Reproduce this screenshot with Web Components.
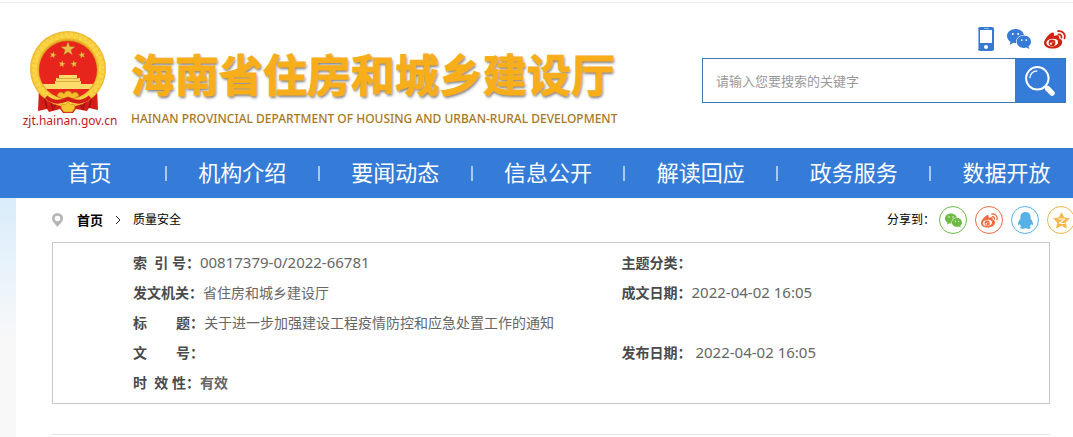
<!DOCTYPE html>
<html lang="zh-CN">
<head>
<meta charset="utf-8">
<title>海南省住房和城乡建设厅</title>
<style>
  html { background: #f8f8f8; }
  body {
    margin: 0;
    overflow-x: hidden;
    font: 14px/30px "Noto Sans", "Noto Sans CJK SC", sans-serif;
    color: #666;
  }
</style>
</head>
<body>
<gov-header>
  <gov-brand slot="brand" site="zjt.hainan.gov.cn">
    海南省住房和城乡建设厅
    <span slot="english">HAINAN PROVINCIAL DEPARTMENT OF HOUSING AND URBAN-RURAL DEVELOPMENT</span>
  </gov-brand>
  <gov-search slot="tools"></gov-search>
</gov-header>
<gov-nav>
  <gov-nav-item>首页</gov-nav-item>
  <gov-nav-item>机构介绍</gov-nav-item>
  <gov-nav-item>要闻动态</gov-nav-item>
  <gov-nav-item>信息公开</gov-nav-item>
  <gov-nav-item>解读回应</gov-nav-item>
  <gov-nav-item>政务服务</gov-nav-item>
  <gov-nav-item>数据开放</gov-nav-item>
</gov-nav>
<gov-page>
  <gov-crumbs slot="crumbs">质量安全</gov-crumbs>
  <gov-share slot="share"></gov-share>
  <gov-record>
    <gov-field number><span slot="label">索&nbsp;&nbsp;引&nbsp;号：</span>00817379-0/2022-66781</gov-field>
    <gov-field><span slot="label">主题分类：</span></gov-field>
    <gov-field><span slot="label">发文机关：</span>省住房和城乡建设厅</gov-field>
    <gov-field number><span slot="label">成文日期：</span>2022-04-02 16:05</gov-field>
    <gov-field wide><span slot="label">标&nbsp;&nbsp;&nbsp;&nbsp;&nbsp;&nbsp;&nbsp;&nbsp;题：</span>关于进一步加强建设工程疫情防控和应急处置工作的通知</gov-field>
    <gov-field><span slot="label">文&nbsp;&nbsp;&nbsp;&nbsp;&nbsp;&nbsp;&nbsp;&nbsp;号：</span></gov-field>
    <gov-field number><span slot="label">发布日期：</span>&nbsp;2022-04-02 16:05</gov-field>
    <gov-field wide><span slot="label">时&nbsp;&nbsp;效&nbsp;性：</span><b>有效</b></gov-field>
  </gov-record>
</gov-page>

<script>
const define = (name, html) => {
  const template = document.createElement('template');
  template.innerHTML = html;
  customElements.define(name, class extends HTMLElement {
    constructor() {
      super();
      this.attachShadow({ mode: 'open' }).append(template.content.cloneNode(true));
    }
    connectedCallback() {
      const site = this.shadowRoot.querySelector('.site');
      if (site) site.textContent = this.getAttribute('site');
    }
  });
};

const ICONS = {
  phone: ['0 0 16 24', '<path fill="#3779d0" d="M2 0h12a2 2 0 0 1 2 2v20a2 2 0 0 1-2 2H2a2 2 0 0 1-2-2V2a2 2 0 0 1 2-2z"/><path fill="#8ab4ec" d="M0 2h1v20H0zM6 1h5v1H6z"/><path fill="#fff" d="M2 3h12v13H2z"/><circle cx="8" cy="20" r="2" fill="#fff"/>'],
  wechat: ['0 0 24 20', '<path fill="currentColor" d="M8.500 0C3.800 0 0 3.100 0 7c0 2.500 1.400 4.500 3.500 5.700L2.700 16l3.500-2.200c1 .3 2 .4 3.100.3-1-4.500 2.600-8.200 7.700-8.200C16 2.400 12.700 0 8.500 0z"/><path fill="currentColor" d="M17 6.600c-4 0-7.300 2.800-7.300 6.200S13 19 17 19c.9 0 1.800-.1 2.500-.4l2.900 1.400-.8-2.700c1.500-1.100 2.400-2.600 2.400-4.500 0-3.400-3.100-6.200-7-6.200z"/><g fill="#fff"><circle cx="5.800" cy="5" r="1"/><circle cx="11.200" cy="5" r="1"/><circle cx="14.700" cy="11.100" r=".9"/><circle cx="19.300" cy="11.100" r=".9"/></g>'],
  weibo: ['0 0 22 19', '<path fill="currentColor" d="M8.800 2.500c1.500.4 1.500 1.900 1 3.500 2.500-1 5-.9 5.400.7.200.7 0 1.300-.2 1.900 2 .5 3.400 1.700 3.200 3.800-.4 3.600-4.800 6.200-9.600 6.200C3.900 18.600 0 16.500 0 13c0-3.300 5.600-10.500 8.800-10.500z"/><ellipse cx="8.300" cy="12.600" rx="5.900" ry="3.900" fill="#fff" transform="rotate(-7 8.300 12.600)"/><circle cx="8" cy="12.800" r="3.400" fill="currentColor"/><circle cx="6.900" cy="13.700" r="1.100" fill="#fff"/><circle cx="9" cy="12" r=".6" fill="#fff"/><path fill="none" stroke="currentColor" stroke-width="1.700" stroke-linecap="round" d="M14 1.200c4.500-.8 7.900 2.800 6.500 7.300M14.500 4.400c2-.2 3.400 1.300 2.900 3.300"/>'],
  qq: ['0 0 20 20', '<path fill="currentColor" d="M10 0C6.100 0 4 2.500 4 5.800v2C2.300 9.800.8 12.300 1.300 15c.2.900 1.200.4 2-1 .4 1.300 1 2.300 1.900 3-1.300.5-1.600 1.400-1 2.100.8.900 4.600.9 5.800-.2 1.200 1.100 5 1.100 5.800.2.600-.7.300-1.600-1-2.100.9-.7 1.500-1.700 1.900-3 .8 1.400 1.800 1.900 2 1 .5-2.700-1-5.200-2.700-7.200v-2C16 2.500 13.900 0 10 0z"/>'],
  qzone: ['0 0 20 20', '<path fill="currentColor" stroke="currentColor" stroke-linejoin="round" d="m10 1 2.800 5.900 6.400.8-4.700 4.500 1.200 6.500L10 15.600l-5.700 3.100 1.200-6.500L.8 7.700l6.400-.8z"/><path fill="none" stroke="#fff" stroke-width="1.200" d="M6.500 8.500c2.500-.7 4.600-.7 7 0L7.500 13c2 .6 4.500.7 7 .2"/>'],
  pin: ['0 0 11 14', '<path fill="#b5b5b5" fill-rule="evenodd" d="M5.500 0A5.500 5.500 0 0 0 0 5.500C0 9 3.200 10.500 5.500 14 7.800 10.500 11 9 11 5.500A5.500 5.500 0 0 0 5.500 0zm0 2.700a2.800 2.800 0 1 1 0 5.600 2.800 2.800 0 0 1 0-5.600z"/>'],
  arrow: ['0 0 6 10', '<path fill="none" stroke="#222" d="m1 1 4 4-4 4"/>'],
  search: ['0 0 28 28', '<circle cx="11.500" cy="11.500" r="10.500" fill="none" stroke="#fff" stroke-width="1.800"/><path fill="none" stroke="#fff" stroke-width="1.200" d="M4.500 11.500c0-4 3-7 7-7"/><path stroke="#fff" stroke-width="5" stroke-linecap="round" d="m21 21 4.300 4.300"/><path stroke="#fff" stroke-width="2.200" d="m18.500 18.500 2 2"/>']
};
customElements.define('gov-icon', class extends HTMLElement {
  constructor() {
    super();
    this.attachShadow({ mode: 'open' });
  }
  connectedCallback() {
    const [box, shapes] = ICONS[this.getAttribute('name')];
    this.shadowRoot.innerHTML = `<style>:host{display:block;flex:none}svg{display:block;width:100%;height:100%}</style><svg viewBox="${box}" aria-hidden="true">${shapes}</svg>`;
  }
});

define('gov-emblem', `
<style>:host { display: block; width: 78px; height: 82px; } svg { display: block; width: 100%; height: 100%; }</style>
<svg viewBox="0 0 78 82" role="img" aria-label="国徽">
  <defs>
    <radialGradient id="gold" cx=".5" cy=".5" r=".5"><stop offset=".74" stop-color="#d79a18"/><stop offset=".82" stop-color="#f8cc38"/><stop offset=".93" stop-color="#fbd747"/><stop offset="1" stop-color="#e9ad25"/></radialGradient>
    <path id="star" d="m0-10 2.400 6.700 7.100.2-5.600 4.400 2 6.800L0 4.100l-5.900 4 2-6.800-5.600-4.400 7.100-.2z"/>
    <clipPath id="disc"><circle cx="39" cy="39" r="29"/></clipPath>
  </defs>
  <path fill="#d51d18" d="M10 57 31 70 39 72 47 70 68 57 69 79 60 77 58 80 47 78 44 82H34l-3-4-11 3-2-3-9 2z"/>
  <path fill="none" stroke="#930e0c" stroke-width="1.200" d="m14 62 4 15m3-11 3 13m40-17-4 15m-3-11-3 13M28 70l-3 7m25-7 3 7"/>
  <circle cx="39" cy="38" r="38" fill="url(#gold)"/>
  <circle cx="39" cy="38" r="35" fill="none" stroke="#cc901e" stroke-width="2" stroke-dasharray="1 4" opacity=".35"/>
  <circle cx="39" cy="38" r="32" fill="none" stroke="#fff08a" stroke-width="1.500" stroke-dasharray="2 4" opacity=".4"/>
  <circle cx="39" cy="39" r="29" fill="#e8251d"/>
  <g fill="#eabd4c" stroke="#b66b12" stroke-width=".5">
    <use href="#star" transform="translate(39 18) scale(.75)"/>
    <use href="#star" transform="translate(24 24) scale(.36) rotate(15)"/>
    <use href="#star" transform="translate(53 24) scale(.36) rotate(-15)"/>
    <use href="#star" transform="translate(33 33) scale(.36) rotate(10)"/>
    <use href="#star" transform="translate(45 33) scale(.36) rotate(-10)"/>
  </g>
  <g clip-path="url(#disc)">
    <path fill="#fbdc6a" d="M30 44h18v3h3v3h1v3h24v5H2v-5h24v-3h1v-3h3z"/>
    <path stroke="#c98825" d="M28 47.500h22M27 50.500h24" stroke-width=".6"/>
  </g>
  <path fill="#f2bd2c" stroke="#c6851a" stroke-width=".6" d="M28 65c1-4 5-5 7-2 1-4 7-4 8 0 2-3 6-2 7 2l-6 3-5-2-5 2z"/>
  <path fill="none" stroke="#d51d18" stroke-width="4" d="M17 66c9 7 14 5 22 2 8 3 13 5 22-2"/>
  <path fill="#f5c631" stroke="#c6851a" stroke-width=".6" d="m33 73 3 1 3-3 3 3 3-1 1 4-3 4h-8l-3-4z"/>
</svg>`);

define('gov-brand', `
<style>
  :host { display: flex; gap: 15px; align-items: flex-end; }
  .mark { display: flex; flex-direction: column; align-items: center; width: 92px; color: #c3181c; font-size: 12px; line-height: 16px; white-space: nowrap; }
  gov-emblem { margin-right: 4px; }
  h1 { margin: 0 0 10px; font: 700 44px/52px "Noto Sans CJK SC", sans-serif; color: #f7ae1a; -webkit-text-stroke: 1px #f7ae1a; text-shadow: 1px 2px 3px #777; white-space: nowrap; }
  p { margin: 0; font-size: 12px; font-weight: 500; line-height: 20px; color: #a9781c; white-space: nowrap; }
</style>
<div class="mark"><gov-emblem></gov-emblem><span class="site"></span></div>
<div><h1><slot></slot></h1><p><slot name="english"></slot></p></div>`);

define('gov-search', `
<style>
  :host { display: block; width: 364px; }
  .links { display: flex; justify-content: flex-end; align-items: center; gap: 13px; height: 24px; margin-bottom: 7px; }
  a { display: block; }
  .phone { width: 16px; height: 24px; }
  .wechat { width: 24px; height: 20px; color: #377bd7; }
  .weibo { width: 22px; height: 19px; color: #cf220f; }
  form { display: flex; height: 45px; box-sizing: border-box; border: 1px solid #3a77b8; }
  input { flex: 1; min-width: 0; border: 0; outline: 0; padding: 0 13px; font: 13px "Noto Sans", "Noto Sans CJK SC", sans-serif; color: #333; background: #fff; }
  input::placeholder { color: #999; opacity: 1; }
  button { width: 50px; border: 0; padding: 0; background: #357bd8; display: grid; place-items: center; }
  button gov-icon { width: 30px; height: 30px; }
</style>
<div class="links">
  <a href="#mobile" aria-label="手机版"><gov-icon class="phone" name="phone"></gov-icon></a>
  <a href="#wechat" aria-label="微信"><gov-icon class="wechat" name="wechat"></gov-icon></a>
  <a href="#weibo" aria-label="微博"><gov-icon class="weibo" name="weibo"></gov-icon></a>
</div>
<form role="search"><input type="text" aria-label="搜索" placeholder="请输入您要搜索的关键字"><button type="button" aria-label="搜索"><gov-icon name="search"></gov-icon></button></form>`);

define('gov-header', `
<style>
  :host { display: block; background: #fff; padding-top: 2px; }
  header { display: flex; justify-content: space-between; align-items: flex-start; gap: 24px; border-top: 1px solid #eee; padding: 24px 7px 19px 24px; }
  slot[name=brand] { display: block; padding-top: 4px; }
</style>
<header><slot name="brand"></slot><slot name="tools"></slot></header>`);

define('gov-nav', `
<style>
  :host { display: block; background: #357bd8; overflow: hidden; }
  nav { display: grid; grid-template-columns: repeat(7, 1fr); margin: 0 -11px 0 14px; }
</style>
<nav><slot></slot></nav>`);

define('gov-nav-item', `
<style>
  :host { display: flex; align-items: center; height: 50px; }
  a { flex: 1; text-align: center; color: #fff; font-size: 22px; line-height: 48px; padding-bottom: 2px; text-decoration: none; white-space: nowrap; }
  :host::after { content: ""; width: 2px; height: 15px; background: #a9c9f2; }
</style>
<a href="#section"><slot></slot></a>`);

define('gov-page', `
<style>
  :host { display: block; padding-left: 16px; background: linear-gradient(#d9ecfa, #e6f2fb 60px, #f8f8f8 140px); }
  main { background: #fff; padding: 0 23px 2px 36px; }
  .top { display: flex; justify-content: space-between; align-items: center; height: 44px; margin-right: -25px; }
  hr { margin: 30px 0 0; border: 0; border-top: 1px solid #e4e4e4; }
</style>
<main><div class="top"><slot name="crumbs"></slot><slot name="share"></slot></div><slot></slot><hr></main>`);

define('gov-crumbs', `
<style>
  :host { display: flex; align-items: center; font-size: 12px; color: #000; }
  .pin { width: 11px; height: 14px; margin-right: 14px; }
  .arrow { width: 6px; height: 10px; margin: 0 12px; }
  a { color: #000; text-decoration: none; }
  .home { font-size: 13px; font-weight: 700; }
</style>
<gov-icon class="pin" name="pin"></gov-icon><a class="home" href="#home">首页</a><gov-icon class="arrow" name="arrow"></gov-icon><a href="#quality"><slot></slot></a>`);

define('gov-share', `
<style>
  :host { display: flex; align-items: center; gap: 8px; font-size: 12px; color: #000; }
  .text { margin-right: -4px; }
  a { box-sizing: border-box; width: 28px; height: 28px; border: 1px solid; border-radius: 50%; display: grid; place-items: center; }
  gov-icon { width: 17px; height: 17px; }
  .green { color: #6dbb44; } .red { color: #ee6b43; } .blue { color: #56b2e6; } .gold { color: #f5b749; }
</style>
<span class="text">分享到：</span>
<a class="green" href="#wechat" aria-label="微信"><gov-icon name="wechat"></gov-icon></a>
<a class="red" href="#weibo" aria-label="微博"><gov-icon name="weibo"></gov-icon></a>
<a class="blue" href="#qq" aria-label="QQ"><gov-icon name="qq"></gov-icon></a>
<a class="gold" href="#qzone" aria-label="QQ空间"><gov-icon name="qzone"></gov-icon></a>`);

define('gov-record', `
<style>
  :host { display: grid; grid-template-columns: 8fr 7fr; padding: 5px 0 5px 80px; border: 1px solid #c8c8c8; }
</style>
<slot></slot>`);

define('gov-field', `
<style>
  :host { display: block; height: 30px; line-height: 30px; }
  :host([wide]) { grid-column: 1 / -1; }
  :host([number]) .value { font-size: 15px; line-height: 20px; }
  .label { color: #4a4a4a; font-weight: 700; }
</style>
<span class="label"><slot name="label"></slot></span><span class="value"><slot></slot></span>`);
</script>
</body>
</html>
